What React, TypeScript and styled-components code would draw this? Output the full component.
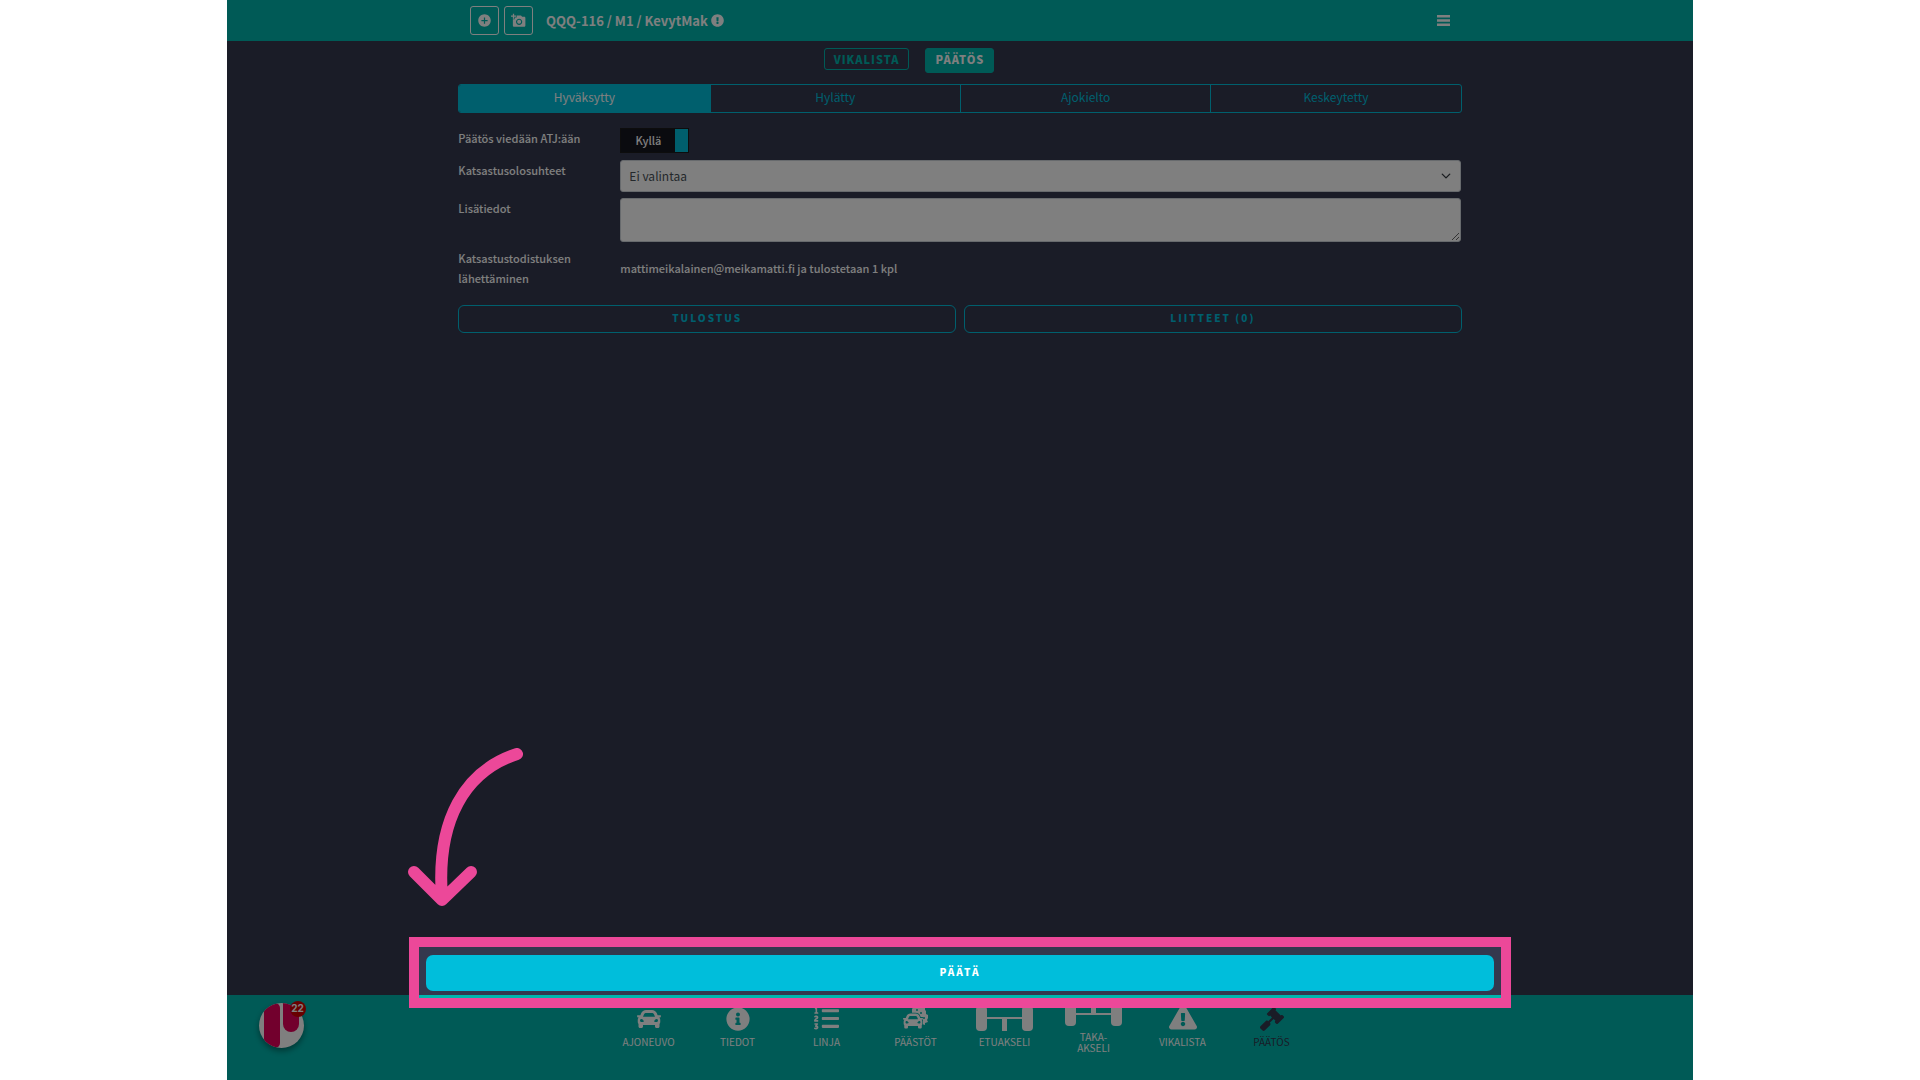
import React from "react";
import styled, { createGlobalStyle } from "styled-components";
import { MdAddCircle, MdAddAPhoto } from "react-icons/md";
import {
  FaCar,
  FaExclamationCircle,
  FaExclamationTriangle,
  FaGavel,
  FaInfoCircle,
  FaListOl,
} from "react-icons/fa";

const teal = "#00b5ad";
const cyan = "#00bedb";
const night = "#34384e";
const pink = "#ec4899";

const GlobalStyle = createGlobalStyle`
  * { box-sizing: border-box; }
  body {
    margin: 0;
    background: #fff;
    font-family: "Noto Sans CJK JP", "Noto Sans", sans-serif;
    font-size: 12px;
    line-height: 20px;
  }
  button, select, textarea { font: inherit; }
  button { cursor: pointer; }
`;

const Frame = styled.div`
  position: relative;
  display: flex;
  flex-direction: column;
  width: 76.4%;
  min-height: 100vh;
  margin: 0 auto;
  overflow: hidden;
  background: ${night};
  color: #fff;
`;

const Header = styled.header`
  height: 41px;
  background: ${teal};
`;

const HeaderInner = styled.div`
  display: flex;
  align-items: center;
  gap: 5px;
  width: 66.8%;
  height: 100%;
  margin: 0 auto;
`;

const IconButton = styled.button`
  display: flex;
  align-items: center;
  justify-content: center;
  width: 29px;
  height: 29px;
  padding: 0;
  border: 1px solid #fff;
  border-radius: 3px;
  background: transparent;
  color: #fff;
`;

const Title = styled.h1`
  display: flex;
  align-items: center;
  gap: 3px;
  margin: 0 auto 0 8px;
  font-size: 13px;
  font-weight: 700;
  line-height: 20px;
`;

const MenuButton = styled.button`
  display: flex;
  padding: 4px 0;
  border: 0;
  background: transparent;
  color: #fff;
`;

const Main = styled.main`
  display: flex;
  flex: 1;
  flex-direction: column;
`;

const Content = styled.div`
  display: flex;
  flex: 1;
  flex-direction: column;
  width: 68.4%;
  margin: 0 auto;
`;

const ViewSwitch = styled.nav`
  display: flex;
  align-items: flex-start;
  justify-content: center;
  gap: 16px;
  margin: 7px 102px 11px 0;
`;

const ViewButton = styled.button<{ $active?: boolean }>`
  height: ${(p) => (p.$active ? 25 : 22)}px;
  padding: 0 9px ${(p) => (p.$active ? 3 : 0)}px;
  border: 1px solid ${teal};
  border-radius: 3px;
  background: ${(p) => (p.$active ? teal : "transparent")};
  color: ${(p) => (p.$active ? "#fff" : teal)};
  font-size: 11px;
  font-weight: 900;
  line-height: 20px;
  letter-spacing: 1px;
`;

const Tabs = styled.div`
  display: grid;
  grid-template-columns: repeat(4, 1fr);
  height: 29px;
  border: 1px solid ${cyan};
  border-radius: 3px;
  overflow: hidden;
`;

const Tab = styled.button<{ $active?: boolean }>`
  padding: 0 0 3px;
  border: 0;
  background: ${(p) => (p.$active ? cyan : "transparent")};
  color: ${(p) => (p.$active ? "#fff" : cyan)};
  line-height: 20px;
  & + & { border-left: 1px solid ${cyan}; }
`;

const Form = styled.form`
  display: grid;
  grid-template-columns: 162px 1fr;
  row-gap: 6px;
  margin-top: 15px;
  padding-right: 1px;
  font-size: 11px;
  font-weight: 500;
`;

const Label = styled.label`
  line-height: 20px;
`;

const Toggle = styled.button`
  display: flex;
  justify-content: space-between;
  width: 69px;
  height: 25px;
  margin-bottom: 1px;
  padding: 0;
  border: 1px solid #1a1a1a;
  background: #14161e;
  color: #fff;
  line-height: 22px;
`;

const ToggleText = styled.span`
  flex: 1;
`;

const ToggleKnob = styled.span`
  width: 13px;
  background: ${cyan};
`;

const SelectBox = styled.div`
  display: grid;
  align-items: center;
  > * { grid-area: 1 / 1; }
  > svg { justify-self: end; margin-right: 10px; pointer-events: none; }
`;

const Select = styled.select`
  width: 100%;
  height: 32px;
  padding: 0 8px 1px;
  appearance: none;
  border: 1px solid #ced4da;
  border-radius: 3px;
  background: #fff;
  color: #495057;
  font-size: 12px;
  font-weight: 400;
`;

const TextArea = styled.textarea`
  display: block;
  width: 100%;
  height: 44px;
  padding: 4px 8px;
  resize: vertical;
  border: 1px solid #ced4da;
  border-radius: 3px;
  background: #fff;
`;

const Delivery = styled.output`
  align-self: center;
`;

const Actions = styled.div`
  display: grid;
  grid-template-columns: 1fr 1fr;
  gap: 8px;
  margin-top: 17px;
`;

const OutlineButton = styled.button`
  height: 28px;
  padding: 0 0 2px;
  border: 1px solid ${cyan};
  border-radius: 6px;
  background: transparent;
  color: ${cyan};
  font-size: 10px;
  font-weight: 900;
  letter-spacing: 2px;
`;

const DecisionBar = styled.div`
  position: relative;
  width: 72.8%;
  margin: 0 auto 4px;
`;

const DecisionButton = styled.button`
  display: block;
  width: 100%;
  height: 36px;
  padding: 0 0 2px;
  border: 0;
  border-radius: 7px;
  background: ${cyan};
  color: #fff;
  font-size: 10px;
  font-weight: 900;
  letter-spacing: 2px;
`;

const Spotlight = styled.div`
  position: absolute;
  z-index: 2;
  inset: -18px -17px -17px;
  border: 10px solid ${pink};
  box-shadow: 0 0 0 3000px rgba(0, 0, 0, 0.5);
  pointer-events: none;
`;

const Arrow = styled.svg`
  position: absolute;
  z-index: 3;
  bottom: 83px;
  left: -19px;
  pointer-events: none;
`;

const Footer = styled.footer`
  position: relative;
  height: 85px;
  background: ${teal};
`;

const NavList = styled.nav`
  display: grid;
  grid-template-columns: repeat(8, 89px);
  justify-content: center;
`;

const NavItem = styled.a<{ $active?: boolean; $wrapped?: boolean }>`
  display: flex;
  flex-direction: column;
  align-items: center;
  padding-top: ${(p) => (p.$wrapped ? 6 : 11)}px;
  gap: 5px;
  color: ${(p) => (p.$active ? night : "#fff")};
  font-size: 10px;
  line-height: 11px;
  text-align: center;
  text-decoration: none;
`;

const Profile = styled.button`
  position: absolute;
  top: 8px;
  left: 32px;
  display: flex;
  padding: 0;
  border: 0;
  border-radius: 50%;
  background: #fff;
  box-shadow: 0 3px 6px rgba(0, 0, 0, 0.4);
`;

const Badge = styled.span`
  position: absolute;
  top: -2px;
  right: -2px;
  width: 16px;
  height: 16px;
  border-radius: 50%;
  background: #d00000;
  color: #fff;
  font: 700 10px/15px Inter, sans-serif;
  text-align: center;
`;

const NavIcon = styled.span`
  display: flex;
  align-items: flex-end;
  justify-content: center;
  height: 25px;
`;

const NavLabel = styled.span`
  white-space: pre-line;
`;

const MenuIcon = () => (
  <svg width="13" height="11" viewBox="0 0 13 11" fill="currentColor" aria-hidden="true">
    <path d="M0 0h13v2.5H0zM0 4.3h13v2.5H0zM0 8.5h13V11H0z" />
  </svg>
);

const Chevron = () => (
  <svg width="10" height="10" viewBox="0 0 16 16" fill="none" stroke="#343a40" strokeWidth="2.2" strokeLinecap="round" strokeLinejoin="round" aria-hidden="true">
    <path d="M2 5l6 6 6-6" />
  </svg>
);

const FrontAxle = () => (
  <svg width="57" height="25" viewBox="0 0 57 25" fill="currentColor" aria-hidden="true">
    <rect width="11" height="25" rx="4" />
    <rect x="46" width="11" height="25" rx="4" />
    <path d="M11 11h35v2H31v12h-5V13H11z" />
  </svg>
);

const RearAxle = () => (
  <svg width="57" height="25" viewBox="0 0 57 25" fill="currentColor" aria-hidden="true">
    <rect width="11" height="25" rx="4" />
    <rect x="46" width="11" height="25" rx="4" />
    <path d="M26 0h5v12h15v2H11v-2h15z" />
  </svg>
);

const EmissionCar = () => (
  <svg width="25" height="25" viewBox="0 0 25 25" fill="currentColor" aria-hidden="true">
    <path d="M9 7V3l2-3h9l2 1v3l1 1v3l2 1v3l-1 2 1 2-3 1v2l-3-1-1-3-2-4-3-2z" />
    <g fill={teal}>
      <circle cx="14" cy="4" r="1" />
      <circle cx="18" cy="7" r="1" />
      <circle cx="21" cy="12" r="1" />
    </g>
    <FaCar x="0" y="5" size={20} stroke={teal} strokeWidth={40} style={{ paintOrder: "stroke" }} />
  </svg>
);

const Logo = () => (
  <svg width="45" height="45" viewBox="0 0 45 45" aria-hidden="true">
    <clipPath id="disc"><circle cx="22.5" cy="22.5" r="22.5" /></clipPath>
    <g clipPath="url(#disc)" fill="#e4005a">
      <rect x="5" y="0" width="16" height="45" rx="5" />
      <rect x="24" y="-8" width="16" height="37" rx="8" />
    </g>
  </svg>
);

const tabs = ["Hyväksytty", "Hylätty", "Ajokielto", "Keskeytetty"];

const navItems = [
  { label: "AJONEUVO", icon: <FaCar size={24} /> },
  { label: "TIEDOT", icon: <FaInfoCircle size={24} /> },
  { label: "LINJA", icon: <FaListOl size={25} /> },
  { label: "PÄÄSTÖT", icon: <EmissionCar /> },
  { label: "ETUAKSELI", icon: <FrontAxle /> },
  { label: "TAKA-\nAKSELI", icon: <RearAxle />, wrapped: true },
  { label: "VIKALISTA", icon: <FaExclamationTriangle size={28} /> },
  { label: "PÄÄTÖS", icon: <FaGavel size={24} />, active: true },
];

export default function App() {
  return (
    <>
      <GlobalStyle />
      <Frame>
        <Header>
          <HeaderInner>
            <IconButton aria-label="Lisää"><MdAddCircle size={15} /></IconButton>
            <IconButton aria-label="Lisää kuva"><MdAddAPhoto size={15} /></IconButton>
            <Title>QQQ-116 / M1 / KevytMak <FaExclamationCircle size={13} /></Title>
            <MenuButton aria-label="Valikko"><MenuIcon /></MenuButton>
          </HeaderInner>
        </Header>
        <Main>
          <Content>
            <ViewSwitch>
              <ViewButton>VIKALISTA</ViewButton>
              <ViewButton $active>PÄÄTÖS</ViewButton>
            </ViewSwitch>
            <Tabs>
              {tabs.map((tab, i) => (
                <Tab key={tab} $active={i === 0}>{tab}</Tab>
              ))}
            </Tabs>
            <Form onSubmit={(e) => e.preventDefault()}>
              <Label htmlFor="atj">Päätös viedään ATJ:ään</Label>
              <Toggle id="atj" type="button" aria-pressed="true">
                <ToggleText>Kyllä</ToggleText>
                <ToggleKnob />
              </Toggle>
              <Label htmlFor="conditions">Katsastusolosuhteet</Label>
              <SelectBox>
                <Select id="conditions"><option>Ei valintaa</option></Select>
                <Chevron />
              </SelectBox>
              <Label htmlFor="details">Lisätiedot</Label>
              <TextArea id="details" />
              <Label htmlFor="delivery">Katsastustodistuksen lähettäminen</Label>
              <Delivery id="delivery">mattimeikalainen@meikamatti.fi ja tulostetaan 1 kpl</Delivery>
            </Form>
            <Actions>
              <OutlineButton>TULOSTUS</OutlineButton>
              <OutlineButton>LIITTEET (0)</OutlineButton>
            </Actions>
          </Content>
          <DecisionBar>
            <DecisionButton>PÄÄTÄ</DecisionButton>
            <Spotlight />
            <Arrow width="116" height="160" viewBox="0 0 116 160" fill="none" stroke={pink} strokeWidth="12" strokeLinecap="round" strokeLinejoin="round" aria-hidden="true">
              <path d="M110 6C58 23 29 72 35 150M7 124l28 28 29-28" />
            </Arrow>
          </DecisionBar>
        </Main>
        <Footer>
          <NavList>
            {navItems.map((item) => (
              <NavItem key={item.label} href="#" $active={item.active} $wrapped={item.wrapped}>
                <NavIcon>{item.icon}</NavIcon>
                <NavLabel>{item.label}</NavLabel>
              </NavItem>
            ))}
          </NavList>
          <Profile aria-label="Ilmoitukset">
            <Logo />
            <Badge>22</Badge>
          </Profile>
        </Footer>
      </Frame>
    </>
  );
}
